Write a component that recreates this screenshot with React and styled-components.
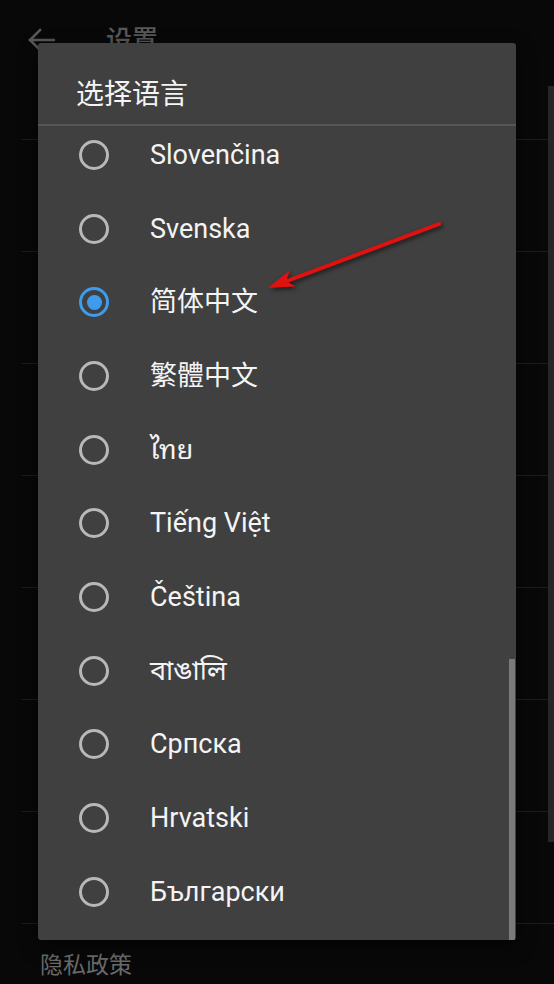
import React from "react";
import styled, { createGlobalStyle } from "styled-components";

const GlobalStyle = createGlobalStyle`
  html, body {
    margin: 0;
    padding: 0;
    background: #080808;
    overflow: hidden;
  }
  * { box-sizing: border-box; }
`;

const Page = styled.div`
  position: relative;
  width: 554px;
  height: 984px;
  background: #080808;
  overflow: hidden;
  font-family: Roboto, "Noto Sans CJK SC", "Noto Sans", sans-serif;
`;

/* ---------- settings screen underneath the dialog ---------- */

const Toolbar = styled.header`
  height: 84px;
  display: flex;
  align-items: flex-start;
  padding: 28px 0 0 27px;
  gap: 51px;
`;

const ToolbarTitle = styled.h1`
  margin: -5px 0 0;
  font-family: "Noto Sans CJK SC", sans-serif;
  font-size: 26px;
  line-height: 30px;
  font-weight: 500;
  color: #585858;
`;

const SettingsViewport = styled.div`
  position: relative;
  height: 900px;
  overflow: hidden;
`;

const SettingsList = styled.div`
  margin-top: -56px;
`;

const SettingsRow = styled.div`
  height: 112px;
  margin-left: 22px;
  border-bottom: 1px solid #1d1d1d;
`;

const SettingsLink = styled.div`
  padding: 28px 0 0 40px;
  font-family: "Noto Sans CJK SC", sans-serif;
  font-size: 23px;
  line-height: 1;
  color: #6a6a6a;
`;

const PageScrollThumb = styled.div`
  position: absolute;
  right: 0;
  top: 2px;
  width: 6px;
  height: 756px;
  background: #272727;
`;

/* ---------- language picker dialog ---------- */

const Dialog = styled.section`
  position: absolute;
  left: 38px;
  top: 43px;
  width: 478px;
  height: 897px;
  background: #404040;
  border-radius: 3px;
  box-shadow: 0 6px 18px rgba(0, 0, 0, 0.55);
  display: flex;
  flex-direction: column;
  overflow: hidden;
`;

const DialogTitle = styled.h2`
  margin: 0;
  height: 83px;
  display: flex;
  align-items: center;
  padding: 16px 0 0 38px;
  font-family: "Noto Sans CJK SC", sans-serif;
  font-size: 28px;
  font-weight: 400;
  color: #f4f4f4;
  border-bottom: 2px solid #555555;
  flex-shrink: 0;
`;

const OptionViewport = styled.div`
  position: relative;
  flex: 1;
  overflow: hidden;
`;

const OptionList = styled.ul`
  list-style: none;
  margin: -8px 0 0;
  padding: 0;
`;

const Option = styled.li`
  height: 73.7px;
  display: flex;
  align-items: center;
  padding-left: 41px;
  gap: 41px;
`;

const Radio = styled.span`
  width: 30px;
  height: 30px;
  border-radius: 50%;
  border: 3px solid ${(p) => (p.$checked ? "#3e9cee" : "#b8b8b8")};
  display: flex;
  align-items: center;
  justify-content: center;
  flex-shrink: 0;

  &::after {
    content: "";
    width: 15px;
    height: 15px;
    border-radius: 50%;
    background: #3e9cee;
    display: ${(p) => (p.$checked ? "block" : "none")};
  }
`;

const OptionLabel = styled.span`
  font-family: Roboto, "Noto Sans CJK SC", "Noto Sans Thai Looped", "Noto Sans Thai",
    "Noto Sans Bengali", "Noto Sans", sans-serif;
  font-size: 27px;
  color: #f4f4f4;
  line-height: 1;
  margin-top: 1px;
`;

const DialogScrollThumb = styled.div`
  position: absolute;
  right: 1px;
  top: 533px;
  bottom: 0;
  width: 6px;
  background: #7a7a7a;
`;

const Annotation = styled.svg`
  position: absolute;
  inset: 0;
  pointer-events: none;
  filter: drop-shadow(2px 2px 2px rgba(0, 0, 0, 0.6));
`;

const languages = [
  "Slovenčina",
  "Svenska",
  "简体中文",
  "繁體中文",
  "ไทย",
  "Tiếng Việt",
  "Čeština",
  "বাঙালি",
  "Српска",
  "Hrvatski",
  "Български",
];

const BackArrow = () => (
  <svg width="28" height="24" viewBox="0 0 28 24" fill="none">
    <path
      d="M27 12H3M13 2L3 12l10 10"
      stroke="#585858"
      strokeWidth="2.6"
      strokeLinecap="square"
    />
  </svg>
);

export default function App() {
  const selected = "简体中文";
  return (
    <>
      <GlobalStyle />
      <Page>
        <Toolbar>
          <BackArrow />
          <ToolbarTitle>设置</ToolbarTitle>
        </Toolbar>
        <SettingsViewport>
          <SettingsList>
            {Array.from({ length: 8 }).map((_, i) => (
              <SettingsRow key={i} />
            ))}
            <SettingsLink>隐私政策</SettingsLink>
          </SettingsList>
          <PageScrollThumb />
        </SettingsViewport>

        <Dialog>
          <DialogTitle>选择语言</DialogTitle>
          <OptionViewport>
            <OptionList>
              {languages.map((lang) => (
                <Option key={lang}>
                  <Radio $checked={lang === selected} />
                  <OptionLabel>{lang}</OptionLabel>
                </Option>
              ))}
            </OptionList>
            <DialogScrollThumb />
          </OptionViewport>
        </Dialog>

        <Annotation width="554" height="984" viewBox="0 0 554 984">
          <line
            x1="439"
            y1="224"
            x2="287"
            y2="281"
            stroke="#e0120f"
            strokeWidth="4"
            strokeLinecap="round"
          />
          <polygon
            points="268,288 289.5,270.5 286.5,281 295.5,286.5"
            fill="#e0120f"
          />
        </Annotation>
      </Page>
    </>
  );
}
